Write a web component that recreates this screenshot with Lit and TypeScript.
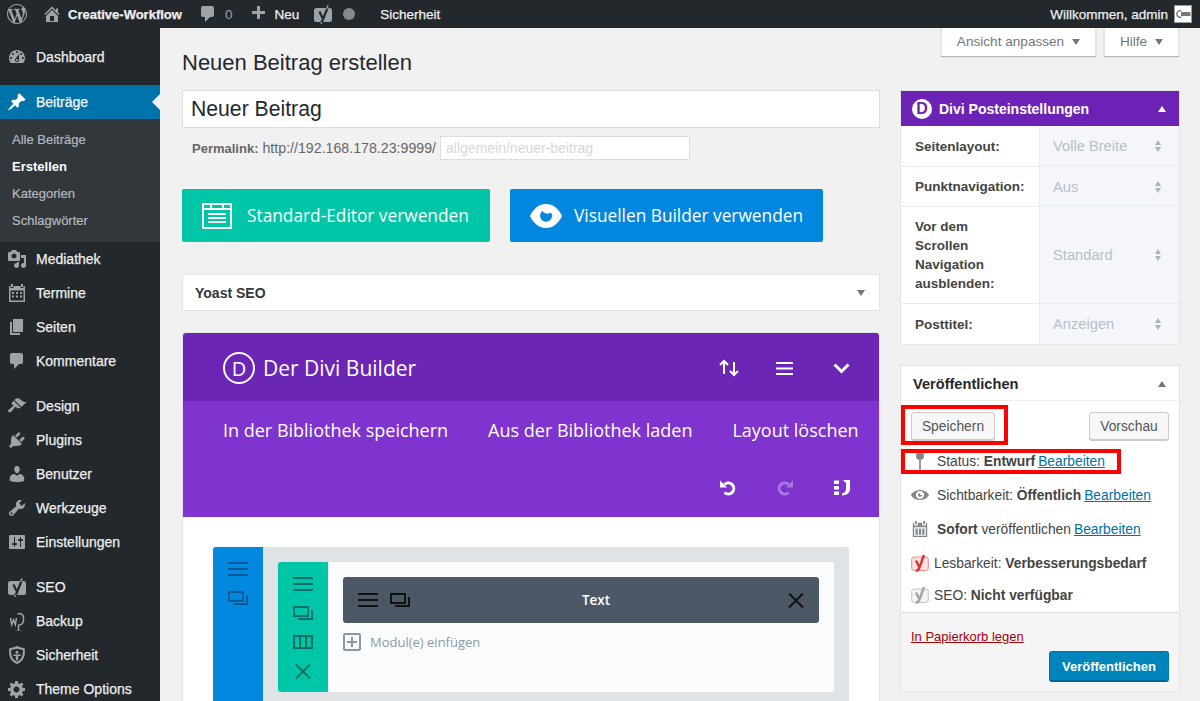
import { LitElement, html, css, svg } from 'lit';
import { customElement } from 'lit/decorators.js';

const dash: Record<string, string> = {
  wp: 'M20 10c0-5.51-4.49-10-10-10C4.48 0 0 4.49 0 10c0 5.52 4.48 10 10 10 5.51 0 10-4.48 10-10zM7.78 15.37L4.37 6.22c.55-.02 1.17-.08 1.17-.08.5-.06.44-1.13-.06-1.11 0 0-1.45.11-2.37.11-.18 0-.37 0-.58-.01C4.12 2.69 6.87 1.11 10 1.11c2.33 0 4.45.87 6.05 2.34-.68-.11-1.65.39-1.65 1.58 0 .74.45 1.36.9 2.1.35.61.55 1.36.55 2.46 0 1.49-1.4 5-1.4 5l-3.03-8.37c.54-.02.82-.17.82-.17.5-.05.44-1.25-.06-1.22 0 0-1.44.12-2.38.12-.87 0-2.33-.12-2.33-.12-.5-.03-.56 1.2-.06 1.22l.92.08 1.26 3.41zM17.41 10c.24-.64.74-1.87.43-4.25.7 1.29 1.05 2.71 1.05 4.25 0 3.29-1.73 6.24-4.4 7.78.97-2.59 1.94-5.2 2.92-7.78zM6.1 18.09C3.12 16.65 1.11 13.53 1.11 10c0-1.3.23-2.48.72-3.59C3.25 10.3 4.67 14.2 6.1 18.09zm4.03-6.63l2.58 6.98c-.86.29-1.76.45-2.71.45-.79 0-1.57-.11-2.29-.33.81-2.38 1.62-4.74 2.42-7.1z',
  home: 'M16 8.5l1.53 1.53-1.06 1.06L10 4.62l-6.47 6.47-1.06-1.06L10 2.5l4 4v-2h2v4zm-6-2.46l6 5.99V18H4v-5.97zM12 17v-5H8v5h4z',
  comment: 'M5 2h9c1.1 0 2 .9 2 2v7c0 1.1-.9 2-2 2h-2l-5 5v-5H5c-1.1 0-2-.9-2-2V4c0-1.1.9-2 2-2z',
  plus: 'M17 7v3h-5v5H9v-5H4V7h5V2h3v5h5z',
  dashboard: 'M3.76 16h12.48c1.1-1.37 1.76-3.11 1.76-5 0-4.42-3.58-8-8-8s-8 3.58-8 8c0 1.89.66 3.63 1.76 5zM10 4c.55 0 1 .45 1 1s-.45 1-1 1-1-.45-1-1 .45-1 1-1zM6 6c.55 0 1 .45 1 1s-.45 1-1 1-1-.45-1-1 .45-1 1-1zm8 0c.55 0 1 .45 1 1s-.45 1-1 1-1-.45-1-1 .45-1 1-1zm-5.37 5.55L12 7v6c0 1.1-.9 2-2 2s-2-.9-2-2c0-.57.24-1.08.63-1.45zM4 10c.55 0 1 .45 1 1s-.45 1-1 1-1-.45-1-1 .45-1 1-1zm12 0c.55 0 1 .45 1 1s-.45 1-1 1-1-.45-1-1 .45-1 1-1zm-5 3c0-.55-.45-1-1-1s-1 .45-1 1 .45 1 1 1 1-.45 1-1z',
  pin: 'M10.44 3.02l1.82-1.82 6.36 6.35-1.83 1.82c-1.05-.68-2.48-.57-3.41.36l-.75.75c-.92.93-1.04 2.35-.35 3.41l-1.83 1.82-2.41-2.41-2.8 2.79c-.42.42-3.38 2.71-3.8 2.29s1.86-3.39 2.28-3.81l2.79-2.79L4.1 9.36l1.83-1.82c1.05.69 2.48.57 3.4-.36l.75-.75c.93-.92 1.05-2.35.36-3.41z',
  media: 'M13 11V4c0-.55-.45-1-1-1h-1.67L9 1H5L3.67 3H2c-.55 0-1 .45-1 1v7c0 .55.45 1 1 1h10c.55 0 1-.45 1-1zM7 4.5c1.38 0 2.5 1.12 2.5 2.5S8.38 9.5 7 9.5 4.5 8.38 4.5 7 5.62 4.5 7 4.5zM14 6h5v10.5c0 1.38-1.12 2.5-2.5 2.5S14 17.88 14 16.5s1.12-2.5 2.5-2.5c.17 0 .34.02.5.05V9h-3V6zm-4 8.05V13h2v3.5c0 1.38-1.12 2.5-2.5 2.5S7 17.88 7 16.5 8.12 14 9.5 14c.17 0 .34.02.5.05z',
  calendar: 'M4.500 1h2v3.500h-2zM13.500 1h2v3.500h-2zM2 3h1.500v3h4V3h5v3h4V3H18v16H2zM3.500 8v9.500h13V8zM5 9.500h2.500v7H5zM8.800 9.500h2.500v7H8.800zM12.500 9.500H15v7h-2.500z',
  termine: 'M4 1h2v3H4zM14 1h2v3h-2zM2 3h1.500v2h3V3h7v2h3V3H18v16H2zM3.500 7.500v10h13v-10zM5 9h2v2H5zM9 9h2v2H9zM13 9h2v2h-2zM5 12.500h2v2H5zM9 12.500h2v2H9zM13 12.500h2v2h-2z',
  pages: 'M6 15V2h10v13H6zm-1 1h8v2H3V5h2v11z',
  brush: 'M14.48 11.06L7.41 3.99l1.5-1.5c.5-.56 2.3-.47 3.51.32 1.21.8 1.43 1.28 2.91 2.1 1.18.64 2.45 1.26 4.45.85zm-.71.71L6.7 4.7 4.93 6.47c-.39.39-.39 1.02 0 1.41l1.06 1.06c.39.39.39 1.03 0 1.42-.6.6-1.43 1.11-2.21 1.69-.35.26-.7.53-1.01.84C1.43 13.23.4 14.85 1.4 15.85c.99 1 2.62-.03 3.97-1.38.31-.31.58-.66.84-1.01.58-.78 1.09-1.61 1.69-2.21.39-.39 1.02-.39 1.41 0l1.06 1.06c.39.39 1.02.39 1.41 0z',
  plug: 'M13.11 4.36L9.87 7.6 8 5.73l3.24-3.24c.35-.34 1.05-.2 1.56.32.52.51.66 1.21.31 1.55zm-8 1.77l.91-1.12 9.01 9.01-1.19.84c-.71.71-2.63 1.16-3.82 1.16H6.14L4.9 17.26c-.59.59-1.54.59-2.12 0-.59-.58-.59-1.53 0-2.12l1.24-1.24v-3.88c0-1.13.4-3.19 1.09-3.89zm7.26 3.97l3.24-3.24c.34-.35 1.04-.21 1.55.31.52.51.66 1.21.31 1.55l-3.24 3.25z',
  user: 'M10 9.25c-2.27 0-2.73-3.44-2.73-3.44C7 4.02 7.82 2 9.97 2c2.16 0 2.98 2.02 2.71 3.81 0 0-.41 3.44-2.68 3.44zm0 2.57L12.72 10c2.39 0 4.52 2.33 4.52 4.53v2.49s-3.65 1.13-7.24 1.13c-3.65 0-7.24-1.13-7.24-1.13v-2.49c0-2.25 1.94-4.48 4.47-4.48z',
  wrench: 'M16.68 9.77c-1.34 1.34-3.3 1.67-4.95.99l-5.41 6.52c-.99.99-2.59.99-3.58 0s-.99-2.59 0-3.57l6.52-5.42c-.68-1.65-.35-3.61.99-4.95 1.28-1.28 3.12-1.62 4.72-1.06l-2.89 2.89 2.82 2.82 2.86-2.87c.53 1.58.18 3.39-1.08 4.65zM3.81 16.21c.4.39 1.04.39 1.43 0 .4-.4.4-1.04 0-1.43-.39-.4-1.03-.4-1.43 0-.39.39-.39 1.03 0 1.43z',
  sliders: 'M18 16V4c0-.55-.45-1-1-1H3c-.55 0-1 .45-1 1v12c0 .55.45 1 1 1h14c.55 0 1-.45 1-1zM8 11h1c.55 0 1 .45 1 1s-.45 1-1 1H8v1.5c0 .28-.22.5-.5.5s-.5-.22-.5-.5V13H6c-.55 0-1-.45-1-1s.45-1 1-1h1V5.5c0-.28.22-.5.5-.5s.5.22.5.5V11zm5-2h-1c-.55 0-1-.45-1-1s.45-1 1-1h1V5.5c0-.28.22-.5.5-.5s.5.22.5.5V7h1c.55 0 1 .45 1 1s-.45 1-1 1h-1v5.5c0 .28-.22.5-.5.5s-.5-.22-.5-.5V9z',
  gear: 'M18 12h-2.18c-.17.7-.44 1.35-.81 1.93l1.54 1.54-2.1 2.1-1.54-1.54c-.58.36-1.23.63-1.91.79V19H8v-2.18c-.68-.16-1.33-.43-1.91-.79l-1.54 1.54-2.12-2.12 1.54-1.54c-.36-.58-.63-1.23-.79-1.91H1V9.03h2.17c.16-.7.44-1.35.8-1.94L2.43 5.55l2.1-2.1 1.54 1.54c.58-.37 1.24-.64 1.93-.81V2h3v2.18c.68.16 1.33.43 1.91.79l1.54-1.54 2.12 2.12-1.54 1.54c.36.59.64 1.24.8 1.94H18V12zm-8.5 1.5c1.66 0 3-1.34 3-3s-1.34-3-3-3-3 1.34-3 3 1.34 3 3 3z',
  eye: 'M10 4.4C3.439 4.4 0 9.232 0 10c0 .766 3.439 5.6 10 5.6 6.56 0 10-4.834 10-5.6 0-.768-3.44-5.6-10-5.6zm0 9.907c-2.455 0-4.445-1.928-4.445-4.307S7.545 5.691 10 5.691s4.444 1.93 4.444 4.309-1.989 4.307-4.444 4.307zM10 10c-.407-.447.663-2.154 0-2.154-1.228 0-2.223.965-2.223 2.154s.995 2.154 2.223 2.154c1.227 0 2.223-.965 2.223-2.154 0-.547-1.877.379-2.223 0z',
  shield: 'M10 .800l2.200 1.300 5.500 1.100c.5 6.300.2 12.500-7.700 15.800C2.100 15.700 1.800 9.500 2.300 3.200l5.500-1.100zM10 3.800L4.200 5c-.2 4.700.3 9 5.800 11.700 5.500-2.700 6-7 5.800-11.700zM10 5.800c.9 0 1.500.7 1.500 1.500s-.6 1.500-1.500 1.500-1.500-.7-1.500-1.500.6-1.500 1.500-1.500zM6.300 9.500h7.400v1.500h-2.500v3.800c-.4.3-.8.5-1.200.7-.4-.2-.8-.4-1.200-.7V11H6.300z',
};

const dashIcon = (name: string, size = 20) => html`<svg width=${size} height=${size} viewBox="0 0 20 20"><path d=${dash[name]} fill="currentColor" fill-rule="evenodd"></path></svg>`;

// Yoast badge on the dark bars: solid plate, y knocked out in the bar colour
const yoastSolid = html`<svg width="20" height="20" viewBox="0 0 20 20">
  <rect x="1" y="4" width="18" height="14" rx="2.500" fill="currentColor"></rect>
  <path d="M6.500 7.500l3 6.500M14.500 4L9.500 16.500 7.800 18" fill="none" stroke="#23282d" stroke-width="2.200"></path>
  <path d="M15 1.500L14 4.500M8.800 18.500L7.500 19.500" fill="none" stroke="currentColor" stroke-width="1.600"></path>
</svg>`;

// Backup plugin icon: W beside a goblet, drawn as strokes
const backupIcon = html`<svg width="20" height="20" viewBox="0 0 20 20" fill="none" stroke="currentColor">
  <path d="M3.500 7l1.200 6.500 1.800-4.500 1.800 4.500L9.500 7" stroke-width="1.500"></path>
  <path d="M10.500 2.800h2.500c2.600 0 3.600 2.500 3.600 5.200 0 3.700-2.300 6-5.100 6.300V20.500M8.500 20.500h6.500" stroke-width="1.500"></path>
</svg>`;

const yoastLine = (plate: string, edge: string, y: string) => html`<svg width="18" height="18" viewBox="0 0 18 18">
  <rect x="0.700" y="3" width="16.600" height="13.500" rx="2.500" fill=${plate} stroke=${edge}></rect>
  <path d="M5 6.500l3.500 7M13 1L8.500 13.500C8 15 7 16.500 5 17" fill="none" stroke=${y} stroke-width="2.400"></path>
</svg>`;

type MenuItem = { label: string; icon: unknown; gap?: boolean };
const menuTop: MenuItem[] = [
  { label: 'Mediathek', icon: dashIcon('media') },
  { label: 'Termine', icon: dashIcon('termine') },
  { label: 'Seiten', icon: dashIcon('pages') },
  { label: 'Kommentare', icon: dashIcon('comment') },
  { label: 'Design', icon: dashIcon('brush'), gap: true },
  { label: 'Plugins', icon: dashIcon('plug') },
  { label: 'Benutzer', icon: dashIcon('user') },
  { label: 'Werkzeuge', icon: dashIcon('wrench') },
  { label: 'Einstellungen', icon: dashIcon('sliders') },
  { label: 'SEO', icon: yoastSolid, gap: true },
  { label: 'Backup', icon: backupIcon },
  { label: 'Sicherheit', icon: dashIcon('shield') },
  { label: 'Theme Options', icon: dashIcon('gear') },
];

const lineIcon = (body: unknown, sw: number) => html`<svg width="20" height="14" viewBox="0 0 20 14" fill="none" stroke="currentColor" stroke-width=${sw}>${body}</svg>`;
const burger = (sw = 1.8) => lineIcon(svg`<path d="M0 1h20M0 7h20M0 13h20"/>`, sw);
const copies = (sw = 1.8) => lineIcon(svg`<path d="M1 1h14v9H1zM19 4v9H5"/>`, sw);
const cols = lineIcon(svg`<path d="M1 1h18v12H1zM7 1v12M13 1v12"/>`, 2);
const cross = (sw = 1.8) => html`<svg width="16" height="15" viewBox="0 0 16 15" fill="none" stroke="currentColor" stroke-width=${sw}><path d="M1 .500l14 14M15 .500l-14 14"></path></svg>`;

@customElement('app-root')
export class AppRoot extends LitElement {
  static styles = css`
    :host {
      display: block;
      width: 1200px;
      height: 701px;
      overflow: hidden;
      background: #f1f1f1;
      font-family: "Liberation Sans", Arial, sans-serif;
      font-size: 13.8px;
      color: #444;
    }
    svg { display: block; flex: none; }
    .adminbar {
      height: 28px;
      background: #23282d;
      color: #eee;
      display: flex;
      align-items: center;
      font-size: 13.5px;
      -webkit-text-stroke: 0.25px #eee;
    }
    .adminbar b { font-size: 13px; }
    .adminbar .grey { color: #9ea3a8; -webkit-text-stroke: 0; }
    .ab-wp { margin-left: 7px; }
    .ab-home { margin-left: 15px; }
    .ab-site { margin-left: 6px; }
    .ab-comment { margin-left: 16px; }
    .ab-count { margin-left: 7px; }
    .ab-plus { margin-left: 16px; }
    .ab-new { margin-left: 6px; }
    .ab-yoast { margin-left: 14px; }
    .ab-dot { width: 12px; height: 12px; border-radius: 50%; background: #888; margin-left: 10px; }
    .ab-sec { margin-left: 25px; }
    .ab-right { margin-left: auto; display: flex; align-items: center; margin-right: 8px; }
    .avatar { margin-left: 6px; }
    .layout { display: flex; height: 673px; }
    .side { width: 160px; flex: none; background: #23282d; padding-top: 12px; color: #eee; }
    .item {
      height: 34px; display: flex; align-items: center; font-size: 14px; position: relative;
      -webkit-text-stroke: 0.25px #eee;
    }
    .item .ic { width: 36px; display: flex; justify-content: center; padding-right: 2px; box-sizing: border-box; color: #9ea3a8; -webkit-text-stroke: 0; }
    .item.gap { margin-top: 11px; }
    .item.current { background: #0073aa; color: #fff; }
    .item.current .ic { color: #fff; }
    .item.current::after {
      content: ''; position: absolute; right: 0; top: 9px;
      border: 8px solid transparent; border-right-color: #f1f1f1; border-left-width: 0;
    }
    .sub { background: #32373c; padding: 7px 0 6px; height: 110px; }
    .sub div {
      height: 27px; line-height: 27px; padding-left: 12px; font-size: 13px; color: #b4b9be;
      -webkit-text-stroke: 0.2px #b4b9be;
    }
    .sub .on { color: #fff; font-weight: 700; -webkit-text-stroke: 0; }
    .content {
      flex: 1; min-width: 0; padding: 0 21px 0 22px;
      display: grid; grid-template-columns: 698px 278px; column-gap: 21px; align-items: start;
    }
    h1 { margin: 0; height: 62px; padding-top: 20px; box-sizing: border-box; font-size: 22px; line-height: 29px; font-weight: 400; color: #23282d; }
    .title-input {
      height: 38px; box-sizing: border-box; background: #fff; border: 1px solid #ddd;
      font-size: 21.2px; line-height: 36px; padding-left: 8px; color: #23282d;
    }
    .permalink { display: flex; align-items: center; margin-top: 8px; padding-left: 10px; color: #666; height: 24px; font-size: 14.2px; }
    .permalink b { margin-right: 4px; font-size: 13px; }
    .slug {
      width: 250px; height: 24px; box-sizing: border-box; margin-left: 4px; background: #fff; border: 1px solid #ddd;
      color: #d8d8d8; line-height: 22px; padding-left: 5px; font-size: 14px;
    }
    .big-row { display: flex; gap: 20px; margin-top: 29px; }
    .big {
      height: 53px; display: flex; align-items: center; border-radius: 2px; color: #fff;
      font-family: "Open Sans", sans-serif; font-size: 17.3px; box-sizing: border-box; padding-left: 20px;
    }
    .big.teal { width: 308px; background: #00c6a8; }
    .big.blue { width: 313px; background: #0287e0; }
    .big span { margin-left: 15px; }
    .big.blue span { margin-left: 12px; }
    .yoast {
      height: 37px; margin-top: 32px; box-sizing: border-box; background: #fff; border: 1px solid #e5e5e5;
      display: flex; align-items: center; justify-content: space-between; padding: 0 14px 0 12px;
      font-weight: 700; font-size: 14px; color: #32373c;
    }
    .caret-d { width: 0; height: 0; border: 4px solid transparent; border-top: 6px solid #72777c; border-bottom: 0; }
    .divi { margin: 22px 1px 0; background: #fff; box-shadow: 0 0 0 1px #e5e5e5; border-radius: 3px 3px 0 0; font-family: "Open Sans", sans-serif; color: #fff; }
    .divi-head { height: 68px; background: #6c26b6; border-radius: 3px 3px 0 0; display: flex; align-items: center; padding: 2px 29px 0 40px; box-sizing: border-box; }
    .d-logo {
      width: 32px; height: 32px; box-sizing: border-box; border: 2px solid #fff; border-radius: 50%;
      display: flex; align-items: center; justify-content: center; font-size: 20px;
    }
    .divi-title { font-size: 21px; margin-left: 8px; }
    .head-icons { margin-left: auto; display: flex; align-items: center; }
    .head-icons .hb { margin-left: 36px; }
    .head-icons .ch { margin-left: 40px; }
    .divi-bar { height: 116px; background: #7f33cf; box-sizing: border-box; padding: 17px 20px 0 40px; }
    .bar-links { display: flex; gap: 40px; font-size: 18px; line-height: 24px; white-space: nowrap; font-weight: 500; }
    .bar-icons { display: flex; justify-content: flex-end; margin-top: 38px; padding-right: 9px; }
    .bar-icons svg + svg { margin-left: 41px; }
    .builder { padding: 30px 30px 0; height: 300px; box-sizing: border-box; }
    .section { display: flex; background: #dfe3e6; border-radius: 3px; height: 300px; }
    .sec-rail { width: 50px; background: #0288de; color: #0b5a96; flex: none; display: flex; flex-direction: column; align-items: center; padding-top: 15px; gap: 15px; border-radius: 3px 0 0 0; box-sizing: border-box; }
    .row { display: flex; margin: 15px 15px 0; flex: 1; height: 130px; background: #fff; border-radius: 3px; overflow: hidden; }
    .row-rail { width: 50px; background: #00c6a8; color: #0b6f68; flex: none; display: flex; flex-direction: column; align-items: center; padding-top: 15px; gap: 15px; box-sizing: border-box; }
    .row-body { flex: 1; padding: 15px; background: #fbfcfe; }
    .module {
      height: 46px; background: #4c5866; border-radius: 3px; display: flex; align-items: center;
      padding: 0 15px; color: #111; gap: 12px;
    }
    .module b { flex: 1; padding-right: 6px; text-align: center; color: #fff; font-size: 13.5px; font-weight: 600; }
    .add { display: flex; align-items: center; margin-top: 10px; color: #8c99a5; font-size: 13px; gap: 9px; height: 18px; }
    .add i { width: 18px; height: 18px; box-sizing: border-box; border: 2px solid #8c99a5; position: relative; display: block; border-radius: 2px; flex: none; }
    .add i::before, .add i::after { content: ''; position: absolute; background: #8c99a5; }
    .add i::before { left: 2px; right: 2px; top: 6px; height: 2px; }
    .add i::after { top: 2px; bottom: 2px; left: 6px; width: 2px; }
    .meta-btns { display: flex; justify-content: flex-end; gap: 8px; height: 28px; }
    .meta-btn {
      background: #fff; box-shadow: 0 1px 1px rgba(0,0,0,.25); display: flex; align-items: center; justify-content: center;
      color: #72777c; height: 28px; box-sizing: border-box; padding-bottom: 1px; border-left: 1px solid #e5e5e5; border-right: 1px solid #e5e5e5;
      font-size: 13.6px;
    }
    .meta-btn::after { content: ''; margin-left: 8px; border: 4px solid transparent; border-top: 6px solid #72777c; border-bottom: 0; width: 0; height: 0; }
    .m1 { width: 155px; }
    .m2 { width: 75px; }
    .post-box { margin-top: 35px; background: #fff; box-shadow: 0 0 0 1px #e5e5e5; }
    .post-head {
      height: 35px; background: #6c23b5; color: #fff; display: flex; align-items: center; padding: 0 13px 0 11px;
      font-weight: 700; font-size: 14px;
    }
    .logo-d { width: 20px; height: 20px; border-radius: 50%; background: #fff; color: #6c23b5; text-align: center; line-height: 20px; font-size: 16px; margin-right: 7px; }
    .caret-u { margin-left: auto; width: 0; height: 0; border: 4px solid transparent; border-bottom: 6px solid #fff; border-top: 0; }
    .post-row { display: grid; grid-template-columns: 138px 1fr; border-bottom: 1px solid #e8edf1; }
    .post-row:last-child { border-bottom: 0; }
    .post-row .k { padding: 0 10px 0 14px; font-weight: 700; color: #444; font-size: 13.5px; line-height: 19px; align-self: center; }
    .post-row .v {
      background: #f4f6f9; border-left: 1px solid #e8edf1; display: flex; align-items: center; justify-content: space-between;
      padding: 0 18px 0 13px; color: #b6c0ca; font-size: 14.7px;
    }
    .updown { display: flex; flex-direction: column; gap: 2px; }
    .updown i { width: 0; height: 0; border: 3.5px solid transparent; display: block; }
    .updown i:first-child { border-bottom: 5px solid #a9b4bf; border-top: 0; }
    .updown i:last-child { border-top: 5px solid #a9b4bf; border-bottom: 0; }
    .pub { margin-top: 22px; background: #fff; box-shadow: 0 0 0 1px #e5e5e5; position: relative; color: #444; }
    .pub-head { height: 35px; border-bottom: 1px solid #eee; box-sizing: border-box; display: flex; align-items: center; justify-content: space-between; padding: 1px 13px 0 12px; font-size: 14.6px; font-weight: 700; color: #23282d; }
    .pub-head .caret-u { border-bottom-color: #72777c; margin: 0; }
    .pub-btns { display: flex; justify-content: space-between; padding: 11px 10px 0; }
    .wp-btn {
      height: 28px; box-sizing: border-box; background: #f7f7f7; border: 1px solid #ccc; border-radius: 3px;
      box-shadow: 0 1px 0 #ccc; color: #555; display: flex; align-items: center; justify-content: center;
    }
    .b1 { width: 84px; }
    .b2 { width: 80px; }
    .lines { padding-top: 4px; }
    .line { display: flex; align-items: center; height: 34px; box-sizing: border-box; padding-left: 10px; white-space: nowrap; }
    .line .icw { width: 26px; flex: none; color: #82878c; }
    .line.status .icw { padding-left: 1px; width: 25px; }
    .line.yo .icw { width: 23px; }
    .line.last { height: 32px; padding-bottom: 2px; }
    a { color: #0073aa; text-decoration: underline; }
    .line a { margin-left: 3px; }
    .pub-foot { background: #f5f5f5; border-top: 1px solid #ddd; height: 79px; box-sizing: border-box; padding: 16px 10px 0; position: relative; font-size: 13px; }
    .pub-foot a { color: #a00; }
    .primary {
      position: absolute; right: 10px; top: 38px; width: 120px; height: 31px; box-sizing: border-box;
      background: #0085ba; border: 1px solid #0073aa; border-bottom-color: #006799; border-bottom-width: 2px; border-radius: 3px;
      color: #fff; font-weight: 700; display: flex; align-items: center; justify-content: center;
    }
    .mark { position: absolute; border: 4px solid #f00; box-sizing: border-box; pointer-events: none; }
    .mark.a { left: 0; top: 39px; width: 107px; height: 40px; }
    .mark.b { left: 0; top: 83px; width: 220px; height: 25px; }
  `;

  render() {
    return html`
      <div class="adminbar">
        <span class="ab-wp grey">${dashIcon('wp')}</span>
        <span class="ab-home grey">${dashIcon('home')}</span>
        <span class="ab-site"><b>Creative-Workflow</b></span>
        <span class="ab-comment grey">${dashIcon('comment')}</span>
        <span class="ab-count grey">0</span>
        <span class="ab-plus grey">${dashIcon('plus')}</span>
        <span class="ab-new">Neu</span>
        <span class="ab-yoast grey">${yoastSolid}</span>
        <span class="ab-dot"></span>
        <span class="ab-sec">Sicherheit</span>
        <div class="ab-right">Willkommen, admin
          <svg class="avatar" width="18" height="18" viewBox="0 0 18 18">
            <rect x=".500" y=".500" width="17" height="17" fill="#fff" stroke="#9a9da0"></rect>
            <rect x="7" y="7" width="9.500" height="4" fill="#777"></rect>
            <path d="M7.500 6a3.300 3.300 0 1 0 0 6" fill="none" stroke="#666" stroke-width="1.300"></path>
          </svg>
        </div>
      </div>
      <div class="layout">
        <nav class="side">
          <div class="item"><span class="ic">${dashIcon('dashboard')}</span>Dashboard</div>
          <div class="item gap current"><span class="ic">${dashIcon('pin')}</span>Beiträge</div>
          <div class="sub">
            <div>Alle Beiträge</div>
            <div class="on">Erstellen</div>
            <div>Kategorien</div>
            <div>Schlagwörter</div>
          </div>
          ${menuTop.map((m) => html`
            <div class="item ${m.gap ? 'gap' : ''}"><span class="ic">${m.icon}</span>${m.label}</div>
          `)}
        </nav>
        <div class="content">
          <main>
            <h1>Neuen Beitrag erstellen</h1>
            <div class="title-input">Neuer Beitrag</div>
            <div class="permalink"><b>Permalink:</b> http://192.168.178.23:9999/<span class="slug">allgemein/neuer-beitrag</span></div>
            <div class="big-row">
              <div class="big teal">
                <svg width="30" height="26" viewBox="0 0 30 26" fill="none" stroke="#fff" stroke-width="2"><path d="M1 1h28v24H1zM1 6h28M9 1v5M21 1v5M6 11h18M6 15h18M6 19h18"/></svg>
                <span>Standard-Editor verwenden</span>
              </div>
              <div class="big blue">
                <svg width="32" height="26" viewBox="0 0 32 26"><path d="M0 13C3.500 5.500 9 1 16 1s12.500 4.500 16 12c-3.500 7.500-9 12-16 12S3.500 20.500 0 13z" fill="#fff"/><path d="M21 9.500a6 6 0 1 1-8.500-1.500 6 6 0 0 0 8.500 1.500z" fill="#0287e0"/></svg>
                <span>Visuellen Builder verwenden</span>
              </div>
            </div>
            <div class="yoast">Yoast SEO<span class="caret-d"></span></div>
            <section class="divi">
              <div class="divi-head">
                <span class="d-logo">D</span>
                <span class="divi-title">Der Divi Builder</span>
                <div class="head-icons">
                  <svg width="22" height="18" viewBox="0 0 22 18" fill="none" stroke="#fff" stroke-width="2"><path d="M6 15V2M2 6l4-4 4 4M16 3v13M12 12l4 4 4-4"/></svg>
                  <svg class="hb" width="17" height="13" viewBox="0 0 17 13" fill="none" stroke="#fff" stroke-width="2"><path d="M0 1h17M0 6.500h17M0 12h17"/></svg>
                  <svg class="ch" width="17" height="11" viewBox="0 0 17 11" fill="none" stroke="#fff" stroke-width="3"><path d="M1.500 1.500l7 7 7-7"/></svg>
                </div>
              </div>
              <div class="divi-bar">
                <div class="bar-links"><span>In der Bibliothek speichern</span><span>Aus der Bibliothek laden</span><span>Layout löschen</span></div>
                <div class="bar-icons">
                  <svg width="16" height="16" viewBox="0 0 16 16"><path d="M4.500 4.500a5.500 5.500 0 1 1 0 8" fill="none" stroke="#fff" stroke-width="3"/><path d="M0 .500v7h7z" fill="#fff"/></svg>
                  <svg width="16" height="16" viewBox="0 0 16 16"><path d="M11.500 4.500a5.500 5.500 0 1 0 0 8" fill="none" stroke="#a77ae0" stroke-width="3"/><path d="M16 .500v7H9z" fill="#a77ae0"/></svg>
                  <svg width="16" height="16" viewBox="0 0 16 16" fill="#fff"><path d="M0 .500h5v3.500H0zM0 6h5v3.500H0zM0 11.500h5V15H0z"/><path d="M9 0h7v3h-4zM12 3h4v6c0 3.500-2.500 6-8 6.500v-2c3-1 4-2.500 4-4.500z"/></svg>
                </div>
              </div>
              <div class="builder">
                <div class="section">
                  <div class="sec-rail">${burger()}${copies()}</div>
                  <div class="row">
                    <div class="row-rail">${burger()}${copies()}${cols}${cross()}</div>
                    <div class="row-body">
                      <div class="module">${burger(2)}${copies(2)}<b>Text</b>${cross(2)}</div>
                      <div class="add"><i></i>Modul(e) einfügen</div>
                    </div>
                  </div>
                </div>
              </div>
            </section>
          </main>
          <aside>
            <div class="meta-btns">
              <div class="meta-btn m1">Ansicht anpassen</div>
              <div class="meta-btn m2">Hilfe</div>
            </div>
            <div class="post-box">
              <div class="post-head"><span class="logo-d">D</span>Divi Posteinstellungen<span class="caret-u"></span></div>
              <div class="post-row"><div class="k">Seitenlayout:</div><div class="v" style="height:40px">Volle Breite<span class="updown"><i></i><i></i></span></div></div>
              <div class="post-row"><div class="k">Punktnavigation:</div><div class="v" style="height:39px">Aus<span class="updown"><i></i><i></i></span></div></div>
              <div class="post-row"><div class="k">Vor dem<br>Scrollen<br>Navigation<br>ausblenden:</div><div class="v" style="height:96px">Standard<span class="updown"><i></i><i></i></span></div></div>
              <div class="post-row"><div class="k">Posttitel:</div><div class="v" style="height:40px">Anzeigen<span class="updown"><i></i><i></i></span></div></div>
            </div>
            <div class="pub">
              <div class="pub-head">Veröffentlichen<span class="caret-u"></span></div>
              <div class="pub-btns"><div class="wp-btn b1">Speichern</div><div class="wp-btn b2">Vorschau</div></div>
              <div class="lines">
                <div class="line status"><span class="icw"><svg width="16" height="20" viewBox="0 0 16 20" fill="#82878c"><circle cx="8" cy="5" r="4"/><rect x="7.200" y="8" width="1.600" height="11"/></svg></span>Status:&nbsp;<b>Entwurf</b><a>Bearbeiten</a></div>
                <div class="line"><span class="icw">${dashIcon('eye', 18)}</span>Sichtbarkeit:&nbsp;<b>Öffentlich</b><a>Bearbeiten</a></div>
                <div class="line"><span class="icw">${dashIcon('calendar', 18)}</span><b>Sofort</b>&nbsp;veröffentlichen<a>Bearbeiten</a></div>
                <div class="line yo"><span class="icw">${yoastLine('#fbe3e3', '#e88', '#dc3232')}</span>Lesbarkeit:&nbsp;<b>Verbesserungsbedarf</b></div>
                <div class="line yo last"><span class="icw">${yoastLine('#f3f3f3', '#c4c6c8', '#a0a5aa')}</span>SEO:&nbsp;<b>Nicht verfügbar</b></div>
              </div>
              <div class="pub-foot"><a>In Papierkorb legen</a><div class="primary">Veröffentlichen</div></div>
              <div class="mark a"></div>
              <div class="mark b"></div>
            </div>
          </aside>
        </div>
      </div>
    `;
  }
}
